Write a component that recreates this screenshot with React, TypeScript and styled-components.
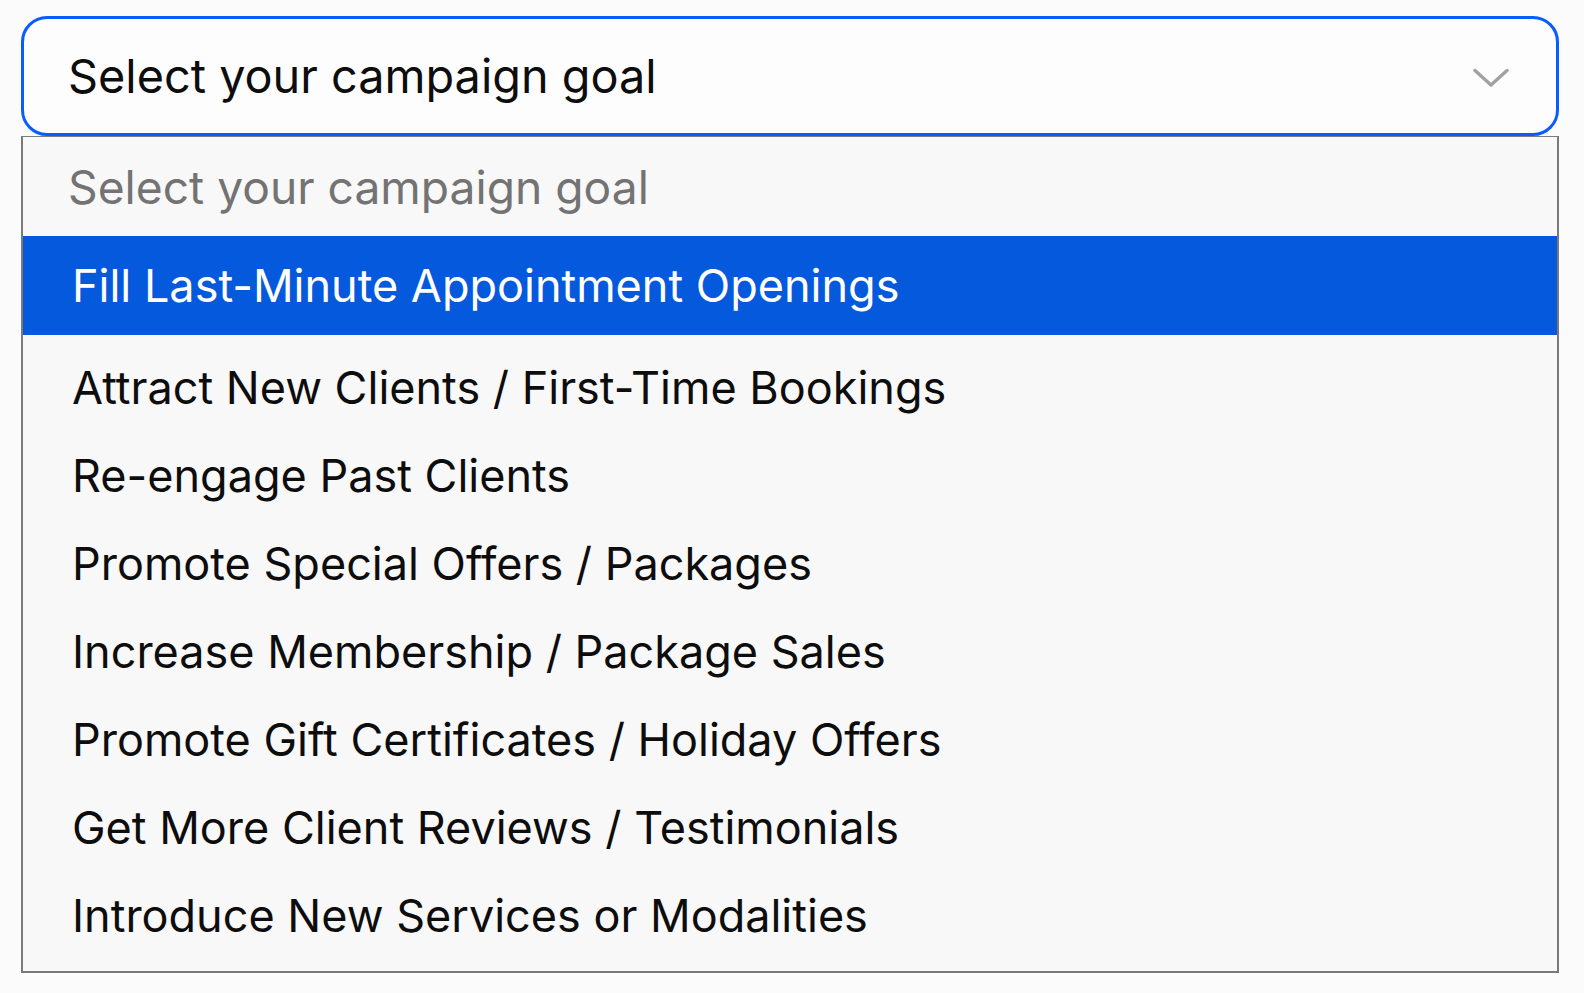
import React, { useState } from 'react';
import styled, { createGlobalStyle } from 'styled-components';

const GlobalStyle = createGlobalStyle`
    html, body {
        margin: 0;
        padding: 0;
        background: #fbfbfb;
        font-family: Inter, "Liberation Sans", Arial, sans-serif;
    }
`

const GOALS = [
    'Fill Last-Minute Appointment Openings',
    'Attract New Clients / First-Time Bookings',
    'Re-engage Past Clients',
    'Promote Special Offers / Packages',
    'Increase Membership / Package Sales',
    'Promote Gift Certificates / Holiday Offers',
    'Get More Client Reviews / Testimonials',
    'Introduce New Services or Modalities',
];

export default function App(): JSX.Element {
    const [active, setActive] = useState(0);

    return (
        <Page>
            <GlobalStyle />
            <SelectWrap>
                <Trigger>
                    <TriggerText>Select your campaign goal</TriggerText>
                    <Chevron viewBox="0 0 36 20" fill="none">
                        <path d="M2 2.5 L18 17 L34 2.5" stroke="#a29fa6" strokeWidth="3.4" strokeLinecap="round" strokeLinejoin="round" />
                    </Chevron>
                </Trigger>
                <Menu>
                    <Placeholder>Select your campaign goal</Placeholder>
                    {GOALS.map((g, i) => (
                        <Option key={g} $selected={i === active} onMouseEnter={() => setActive(i)}>
                            {g}
                        </Option>
                    ))}
                </Menu>
            </SelectWrap>
        </Page>
    )
}

const Page = styled.div`
    padding: 16px 25px 20px 21px;
`

const SelectWrap = styled.div`
    width: 1538px;
    display: flex;
    flex-direction: column;
`

const Trigger = styled.div`
    box-sizing: border-box;
    height: 120px;
    border: 3px solid #0a5cff;
    border-radius: 26px;
    background: #fdfdfd;
    display: flex;
    align-items: center;
    justify-content: space-between;
    padding: 0 47px 0 44px;
`

const TriggerText = styled.span`
    font-size: 46.8px;
    color: #0d0d0d;
`

const Chevron = styled.svg`
    width: 36px;
    height: 20px;
    margin-top: 4px;
`

const Menu = styled.div`
    box-sizing: border-box;
    border: 2px solid #7a7a7a;
    border-top-width: 1px;
    background: #f8f8f8;
    padding-bottom: 12px;
    display: flex;
    flex-direction: column;
`

const Placeholder = styled.div`
    height: 99px;
    display: flex;
    align-items: center;
    padding-left: 45px;
    font-size: 46.2px;
    color: #737373;
`

const Option = styled.div<{ $selected?: boolean }>`
    height: ${p => p.$selected ? '99px' : '88px'};
    margin-bottom: ${p => p.$selected ? '8px' : '0'};
    display: flex;
    align-items: center;
    padding-left: 49px;
    font-size: 45px;
    color: ${p => p.$selected ? '#ffffff' : '#0d0d0d'};
    background: ${p => p.$selected ? '#0559dd' : 'transparent'};
    cursor: default;
`
